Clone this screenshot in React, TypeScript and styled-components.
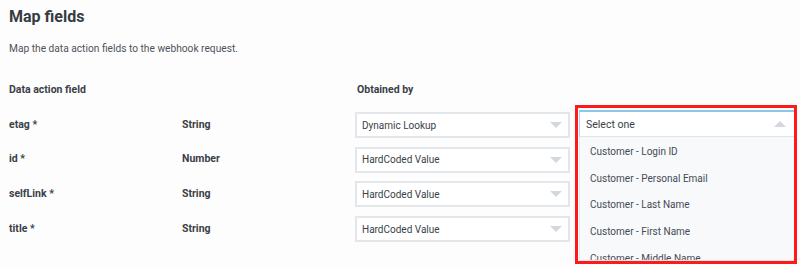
import React from "react";
import styled, { createGlobalStyle } from "styled-components";

const Global = createGlobalStyle`
  html, body { margin: 0; padding: 0; background: #fdfdfd; }
  body { font-family: Roboto, "Liberation Sans", Arial, sans-serif; color: #3a3f48; }
`;

const Page = styled.div`
  padding: 7px 9px 0 9px;
  width: 800px;
  height: 269px;
  box-sizing: border-box;
  overflow: hidden;
`;

const Title = styled.h1`
  margin: 0;
  font-size: 16px;
  line-height: 20px;
  font-weight: 700;
  color: #363b44;
`;

const Desc = styled.p`
  margin: 15px 0 0 0;
  font-size: 10.2px;
  line-height: 14px;
  color: #4e535b;
`;

const Grid = styled.div`
  display: grid;
  grid-template-columns: 173px 173px 215px 216px;
  column-gap: 0;
  row-gap: 8.7px;
  align-items: center;
`;

const HeadGrid = styled(Grid)`
  margin-top: 27px;
  margin-bottom: 15px;
`;

const HeadCell = styled.div<{ $indent?: number }>`
  font-size: 10.5px;
  line-height: 14px;
  font-weight: 700;
  color: #3a3f48;
  padding-left: ${(p) => p.$indent ?? 0}px;
`;

const RowGrid = styled(Grid)`
  grid-auto-rows: 26px;
`;

const Label = styled.div`
  font-size: 10.5px;
  line-height: 14px;
  margin-top: -1px;
  font-weight: 700;
  color: #3a3f48;
`;

const Select = styled.div`
  height: 26px;
  box-sizing: border-box;
  border: 2px solid #e3e7ec;
  background: #fff;
  display: flex;
  align-items: center;
  justify-content: space-between;
  padding: 0 6px 0 5px;
  font-size: 10px;
  color: #3a3f48;
`;

const Arrow = styled.span<{ $up?: boolean }>`
  width: 0;
  height: 0;
  border-left: 6px solid transparent;
  border-right: 6px solid transparent;
  ${(p) =>
    p.$up
      ? "border-bottom: 6px solid #d3d8df;"
      : "border-top: 6px solid #d3d8df;"}
`;

const DropCell = styled.div`
  position: relative;
  margin-left: 9px;
  height: 26px;
`;

const Frame = styled.div`
  position: absolute;
  left: -4px;
  top: -7px;
  width: 222px;
  height: 159px;
  box-sizing: border-box;
  border: 3px solid #ff1a1a;
  padding: 2px 0 0 1px;
  display: flex;
  flex-direction: column;
  background: #fdfdfd;
`;

const OpenSelect = styled.div`
  height: 27px;
  flex: none;
  box-sizing: border-box;
  border-top: 2px solid #8ec7e4;
  border-left: 1px solid #a9d3ea;
  border-bottom: 1px solid #dfe4ea;
  background: #fff;
  display: flex;
  align-items: center;
  justify-content: space-between;
  padding: 0 8px 0 6px;
  font-size: 10.5px;
  color: #3a3f48;
`;

const List = styled.ul`
  list-style: none;
  margin: 0;
  padding: 2px 0 0 0;
  flex: 1;
  overflow: hidden;
  background: #f7f9fb;
  border-left: 1px solid #e6eaef;
  border-bottom: 1px solid #dfe4ea;
`;

const Item = styled.li`
  height: 26.7px;
  line-height: 26.7px;
  padding-left: 10px;
  font-size: 10px;
  color: #464b53;
  white-space: nowrap;
`;

const rows = [
  { name: "etag *", type: "String", by: "Dynamic Lookup" },
  { name: "id *", type: "Number", by: "HardCoded Value" },
  { name: "selfLink *", type: "String", by: "HardCoded Value" },
  { name: "title *", type: "String", by: "HardCoded Value" },
];

const options = [
  "Customer - Login ID",
  "Customer - Personal Email",
  "Customer - Last Name",
  "Customer - First Name",
  "Customer - Middle Name",
];

export default function App() {
  return (
    <>
      <Global />
      <Page>
        <Title>Map fields</Title>
        <Desc>Map the data action fields to the webhook request.</Desc>
        <HeadGrid>
          <HeadCell>Data action field</HeadCell>
          <HeadCell />
          <HeadCell $indent={2}>Obtained by</HeadCell>
          <HeadCell />
        </HeadGrid>
        <RowGrid>
          {rows.map((r, i) => (
            <React.Fragment key={r.name}>
              <Label>{r.name}</Label>
              <Label>{r.type}</Label>
              <Select>
                <span>{r.by}</span>
                <Arrow />
              </Select>
              {i === 0 ? (
                <DropCell>
                  <Frame>
                    <OpenSelect>
                      <span>Select one</span>
                      <Arrow $up />
                    </OpenSelect>
                    <List>
                      {options.map((o) => (
                        <Item key={o}>{o}</Item>
                      ))}
                    </List>
                  </Frame>
                </DropCell>
              ) : (
                <div />
              )}
            </React.Fragment>
          ))}
        </RowGrid>
      </Page>
    </>
  );
}
